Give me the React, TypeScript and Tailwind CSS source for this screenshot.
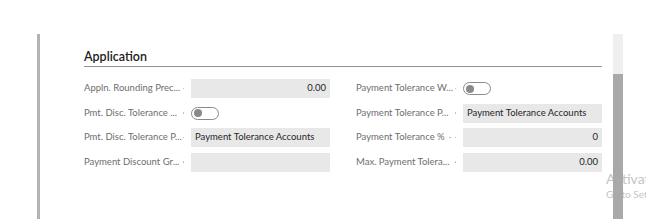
import React from 'react';

type Field =
  | { label: string; kind: 'text'; value: string; align?: 'left' | 'right'; dots?: number }
  | { label: string; kind: 'toggle'; dots?: number };

const leftFields: Field[] = [
  { label: 'Appln. Rounding Prec...', kind: 'text', value: '0.00', align: 'right' },
  { label: 'Pmt. Disc. Tolerance ...', kind: 'toggle' },
  { label: 'Pmt. Disc. Tolerance P...', kind: 'text', value: 'Payment Tolerance Accounts' },
  { label: 'Payment Discount Gr...', kind: 'text', value: '' },
];

const rightFields: Field[] = [
  { label: 'Payment Tolerance W...', kind: 'toggle' },
  { label: 'Payment Tolerance P...', kind: 'text', value: 'Payment Tolerance Accounts' },
  { label: 'Payment Tolerance %', kind: 'text', value: '0', align: 'right', dots: 2 },
  { label: 'Max. Payment Tolera...', kind: 'text', value: '0.00', align: 'right' },
];

const Toggle: React.FC = () => (
  <div className="flex items-center w-[28px] h-[13px] rounded-full border border-[#8a8a8a] bg-white pl-[2px]">
    <div className="w-[8px] h-[8px] rounded-full bg-[#8a8a8a]" />
  </div>
);

const FieldRow: React.FC<{ f: Field }> = ({ f }) => (
  <div className="flex items-center h-[19px]">
    <div className="w-[107px] flex items-center shrink-0 pr-[7px]">
      <span className="text-[9.5px] text-[#6e6e6e] whitespace-nowrap">{f.label}</span>
      <span className="flex-1 flex justify-end items-center gap-[4px]">
        {Array.from({ length: f.dots ?? 1 }).map((_, i) => (
          <span key={i} className="block w-[1.5px] h-[1.5px] rounded-full bg-[#b5b5b5]" />
        ))}
      </span>
    </div>
    {f.kind === 'toggle' ? (
      <Toggle />
    ) : (
      <div
        className={
          'flex-1 min-w-0 h-[19px] bg-[#e8e8e8] flex items-center px-[4px] text-[9.5px] text-[#262626] whitespace-nowrap ' +
          (f.align === 'right' ? 'justify-end' : 'justify-start')
        }
      >
        {f.value}
      </div>
    )}
  </div>
);

export default function App() {
  return (
    <div
      className="relative w-[646px] h-[223px] bg-white overflow-hidden"
      style={{ fontFamily: 'Lato, "Open Sans", Arial, sans-serif' }}
    >
      <div className="flex pt-[34px] h-[219px]">
        <div className="ml-[37px] w-[3px] bg-[#b3b3b3]" />
        <div className="ml-[44px] w-[518px]">
          <div className="mt-[14px] h-[19px] border-b border-[#8c939c] flex items-end pb-[2.5px]">
            <span className="text-[12.5px] font-semibold text-[#222] leading-none">Application</span>
          </div>
          <div className="mt-[12px] grid grid-cols-2 gap-x-[26px]">
            <div className="flex flex-col gap-[5.5px]">
              {leftFields.map((f) => (
                <FieldRow key={f.label} f={f} />
              ))}
            </div>
            <div className="flex flex-col gap-[5.5px]">
              {rightFields.map((f) => (
                <FieldRow key={f.label} f={f} />
              ))}
            </div>
          </div>
        </div>
        <div className="ml-[11px] w-[10px] flex flex-col relative z-10">
          <div className="h-[40px] bg-[#efefef]" />
          <div className="flex-1 bg-[#a9a9a9]" />
        </div>
      </div>
      <div className="absolute left-[606px] top-[172px] text-[#c4c4c4] leading-none whitespace-nowrap">
        <div className="text-[14px]">Activate Windows</div>
        <div className="text-[10px] mt-[3px]">Go to Settings</div>
      </div>
    </div>
  );
}
